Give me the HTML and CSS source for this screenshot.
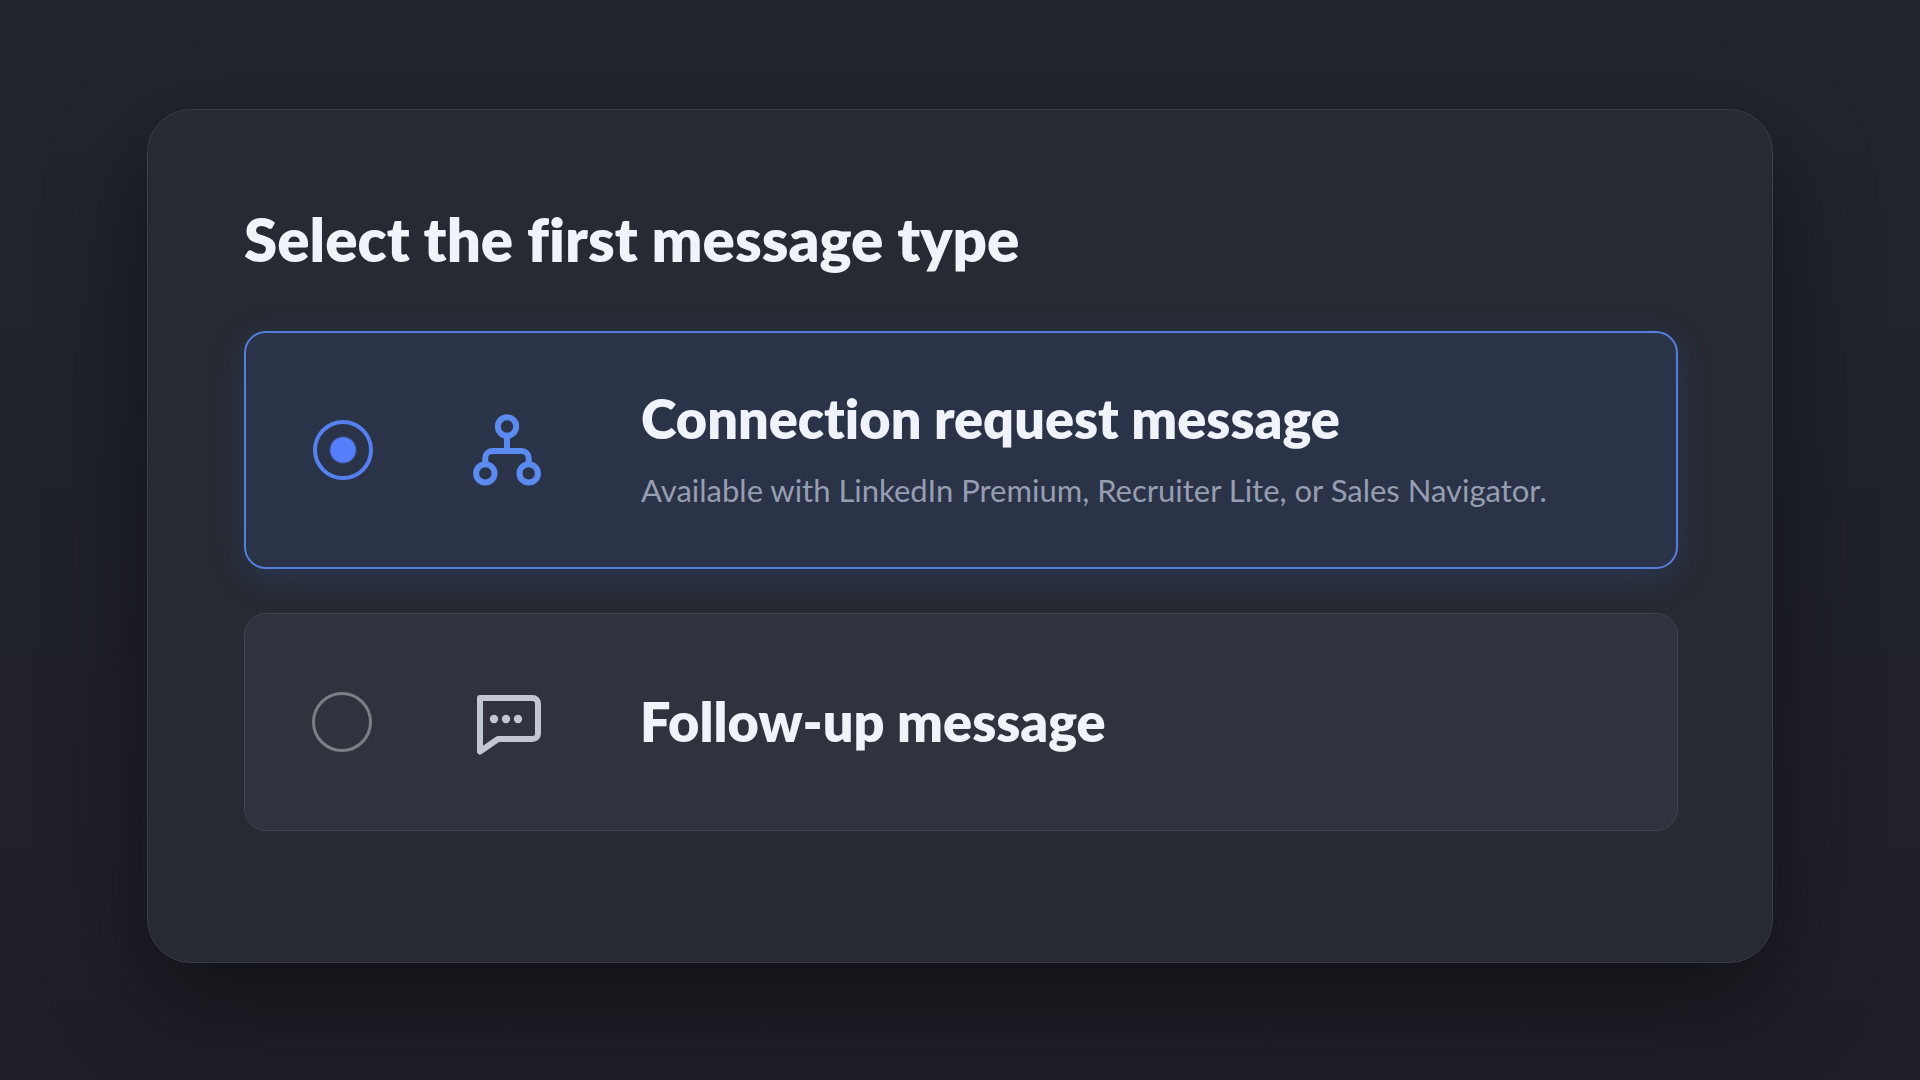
FILE: index.html
```html
<!DOCTYPE html>
<html lang="en">
<head>
  <meta charset="utf-8">
  <meta name="viewport" content="width=device-width, initial-scale=1">
  <title>Select the first message type</title>
  <link rel="stylesheet" href="styles.css">
</head>
<body>
  <main class="card">
    <form>
      <fieldset class="group">
        <legend class="heading">Select the first message type</legend>

        <label class="option option-detailed" for="type-connection">
          <input class="radio" type="radio" id="type-connection" name="message-type" value="connection" checked>
          <svg class="icon icon-network" viewBox="0 0 72 72" fill="none" stroke="currentColor" stroke-width="6" stroke-linecap="round" aria-hidden="true">
            <circle cx="36" cy="12.5" r="9.2"/>
            <circle cx="14.3" cy="59.4" r="9.2"/>
            <circle cx="57.7" cy="59.4" r="9.2"/>
            <path d="M36 22v8" stroke-linecap="butt"/>
            <path d="M36 30v4M14.3 49V44a7 7 0 0 1 7-7h29.4a7 7 0 0 1 7 7v5"/>
          </svg>
          <span class="text">
            <span class="name">Connection request message</span>
            <span class="note">Available with LinkedIn Premium, Recruiter Lite, or Sales Navigator.</span>
          </span>
        </label>

        <label class="option" for="type-follow-up">
          <input class="radio" type="radio" id="type-follow-up" name="message-type" value="follow-up">
          <svg class="icon icon-chat" viewBox="0 0 72 72" fill="none" stroke="currentColor" stroke-width="6" stroke-linejoin="round" aria-hidden="true">
            <path d="M10 12h52.500a5.500 5.500 0 0 1 5.500 5.500v30a5.500 5.500 0 0 1-5.500 5.500H28L10 65.500z"/>
            <g fill="currentColor" stroke="none">
              <circle cx="24" cy="33" r="4.200"/>
              <circle cx="36" cy="33" r="4.200"/>
              <circle cx="48" cy="33" r="4.200"/>
            </g>
          </svg>
          <span class="text">
            <span class="name">Follow-up message</span>
          </span>
        </label>
      </fieldset>
    </form>
  </main>
</body>
</html>
```

FILE: styles.css
```css
* {
  box-sizing: border-box;
}

body {
  margin: 0;
  min-height: 100vh;
  padding: 109px 147px;
  background: linear-gradient(#21252e, #1f1f28);
  color: #f0f3fa;
  font-family: Lato, sans-serif;
  font-variant-ligatures: none;
}

.card {
  padding: 93px 94px 131px 96px;
  border: 1px solid #3a3d45;
  border-radius: 44px;
  background: #272a32;
  box-shadow: 0 40px 100px rgba(0, 0, 0, 0.45);
}

.group {
  display: flex;
  flex-direction: column;
  gap: 44px;
  min-width: 0;
  margin: 0;
  padding: 0;
  border: 0;
}

.heading {
  margin-bottom: 56px;
  padding: 0;
  font-size: 60px;
  font-weight: 800;
  line-height: 72px;
}

.option {
  display: flex;
  align-items: center;
  gap: 98px;
  min-height: 218px;
  padding: 40px 67px;
  border: 1px solid #41434d;
  border-radius: 22px;
  background: #30323d;
  cursor: pointer;
}

.option-detailed {
  min-height: 238px;
}

.option:has(.radio:checked) {
  border: 2px solid #567edb;
  background: #2b3348;
  box-shadow: 0 8px 32px rgba(50, 100, 190, 0.25);
}

.radio {
  appearance: none;
  flex: none;
  width: 60px;
  height: 60px;
  margin: 0;
  border: 3px solid #7c7e85;
  border-radius: 50%;
}

.radio:checked {
  border: 4px solid #5580f0;
  background: radial-gradient(circle, #557ffa 12px, transparent 14px);
}

.icon {
  flex: none;
  width: 72px;
  height: 72px;
}

.icon-network {
  color: #5b8bee;
}

.icon-chat {
  color: #c3c7d4;
}

.text {
  display: flex;
  flex-direction: column;
  gap: 18px;
}

.name {
  font-size: 54px;
  font-weight: 800;
  line-height: 62px;
}

.note {
  color: #969eb1;
  font-size: 31px;
  line-height: 44px;
}

@media (max-width: 1200px) {
  body {
    padding: 32px;
  }

  .card {
    padding: 48px;
  }

  .option {
    gap: 32px;
    padding: 32px;
  }
}
```
